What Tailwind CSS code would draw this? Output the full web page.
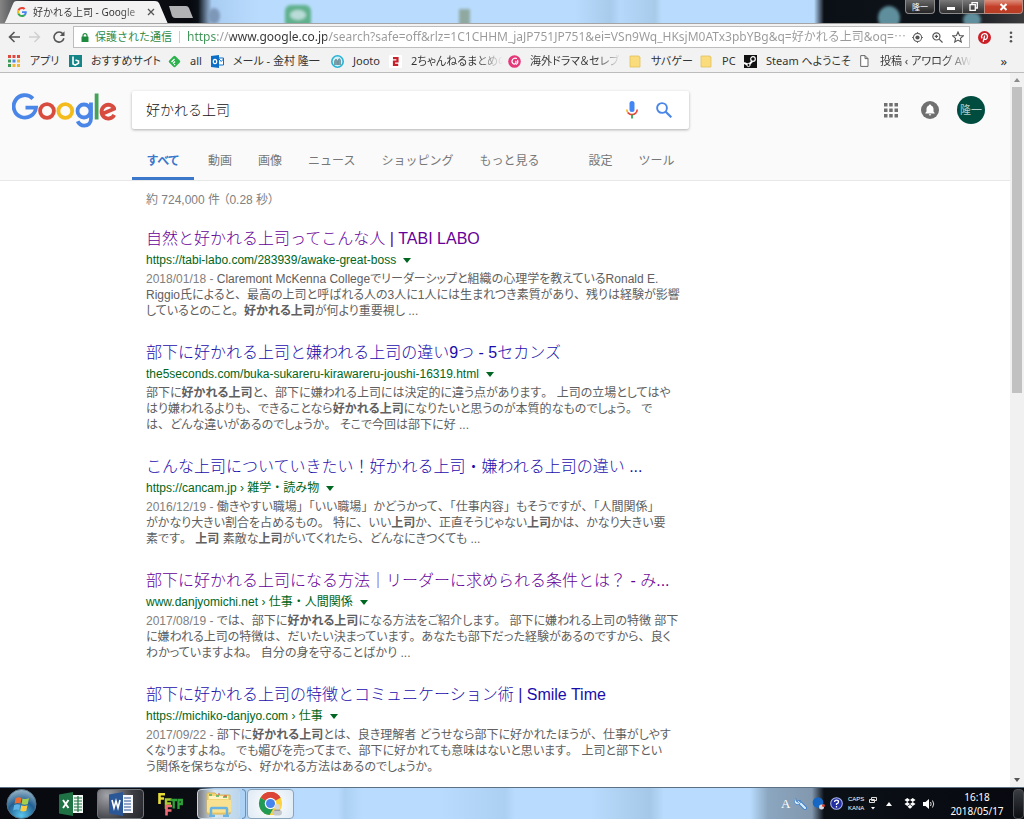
<!DOCTYPE html>
<html lang="ja">
<head>
<meta charset="utf-8">
<title>好かれる上司 - Google 検索</title>
<script src="https://cdn.jsdelivr.net/npm/@tailwindcss/browser@4"></script>
</head>
<body class="flex min-h-screen flex-col overflow-x-hidden bg-white font-['Liberation_Sans','Noto_Sans_CJK_JP',sans-serif] text-[#6a6a6a]">

<!-- window frame: tab strip and caption buttons -->
<header class="relative flex h-6 items-start justify-between overflow-hidden border-b border-[#a5a5a5] bg-[linear-gradient(90deg,#858585_0,#1b1d22_30px,#07090f_190px,#0b1017_198px,#a9cdf2_212px,#b9dcfe_260px,#b9dcfe_575px,#a8cbec_610px,#b5d8fb_620px,#a9cbea_655px,#b9dcfe_662px,#b9dcfe_814px,#0b0f16_824px,#10151c_960px,#3b3b3d_1024px)]">
  <svg class="absolute left-0 top-0 h-6 w-full" aria-hidden="true">
    <defs><filter id="soft"><feGaussianBlur stdDeviation="1.5"/></filter></defs>
    <g filter="url(#soft)">
      <rect x="285" y="5" width="26" height="24" rx="6" fill="#5fb08c"/>
      <ellipse cx="298" cy="15" rx="8" ry="5" fill="#b9dcd8"/>
      <rect x="459" y="9" width="11" height="20" fill="#8fa9a0"/>
      <ellipse cx="214" cy="16" rx="6" ry="8" fill="#7d97b8"/>
      <ellipse cx="889" cy="18" rx="11" ry="12" fill="#5e8f9c"/>
      <ellipse cx="972" cy="20" rx="9" ry="8" fill="#5e8f9c"/>
    </g>
  </svg>
  <div class="relative flex">
    <div class="relative flex h-6 w-[168px] items-center pl-[17px]">
      <svg class="absolute inset-0 h-6 w-[168px]" viewBox="0 0 168 24" aria-hidden="true"><path d="M4 24C7 20 12 5 14 2Q15 1 17 1H155Q158 1 159 3L168 24Z" fill="#f2f2f2"/></svg>
      <svg class="relative h-[10px] w-[10px] shrink-0" viewBox="0 0 48 48" aria-hidden="true"><path fill="#ea4335" d="M24 9.5c3.5 0 6.700 1.200 9.200 3.600l6.900-6.900C35.900 2.400 30.500 0 24 0 14.600 0 6.500 5.400 2.600 13.200l8 6.200C12.400 13.700 17.700 9.500 24 9.500z"/><path fill="#4285f4" d="M47 24.500c0-1.600-.2-3.100-.4-4.500H24v9h12.900c-.6 3-2.200 5.500-4.800 7.200l7.700 6C44.400 38 47 31.800 47 24.500z"/><path fill="#fbbc05" d="M10.500 28.600c-.5-1.500-.8-3-.8-4.600s.3-3.100.8-4.600l-8-6.200C.9 16.500 0 20.100 0 24s.9 7.500 2.600 10.800z"/><path fill="#34a853" d="M24 48c6.500 0 11.900-2.100 15.900-5.800l-7.700-6c-2.200 1.500-4.900 2.300-8.200 2.300-6.300 0-11.600-4.200-13.500-9.900l-8 6.200C6.500 42.600 14.600 48 24 48z"/></svg>
      <span class="relative ml-1.5 w-[108px] whitespace-nowrap bg-[linear-gradient(90deg,#333_88px,#aaa_108px)] bg-clip-text font-['Noto_Sans','Noto_Sans_CJK_JP',sans-serif] text-[10px] leading-4 text-transparent">好かれる上司 - Google</span>
      <button class="relative ml-1.5 h-2 w-2" aria-label="タブを閉じる"><svg class="h-2 w-2" viewBox="0 0 8 8"><path d="M1 1l6 6M7 1L1 7" stroke="#555" stroke-width="1.300"/></svg></button>
    </div>
    <button class="mt-1.5 h-3 w-6" aria-label="新しいタブ"><svg class="h-3 w-[26px]" viewBox="0 0 26 12"><path d="M1 0H18Q20 0 21 2L25 12H7Q5 12 4 10Z" fill="#b2b2b4"/></svg></button>
  </div>
  <div class="relative mr-px flex h-[14px] text-white">
    <button class="mr-1 h-[14px] w-[30px] rounded-b border border-t-0 border-[#8b8b8b] bg-linear-to-b from-[#696969] to-[#252525] text-center font-['Noto_Sans_CJK_JP',sans-serif] text-[8px] leading-[12px]">隆一</button>
    <button class="grid h-[14px] w-6 place-items-center rounded-bl border border-t-0 border-[#8b8b8b] bg-linear-to-b from-[#7a7a7a] to-[#303030]" aria-label="最小化"><span class="mt-1 h-[3px] w-2 bg-white"></span></button>
    <button class="grid h-[14px] w-[21px] place-items-center border-b border-[#8b8b8b] bg-linear-to-b from-[#7a7a7a] to-[#303030]" aria-label="元に戻す"><svg class="h-[9px] w-[9px]" viewBox="0 0 9 9"><path d="M3 2V.7H8.300V6H7M1 2.700H6.300V8.300H1Z" fill="none" stroke="#fff" stroke-width="1.300"/></svg></button>
    <button class="grid h-[14px] w-[39px] place-items-center rounded-br border border-t-0 border-[#b98a80] bg-linear-to-b from-[#dc8f7c] via-[#c5402a] to-[#b63c22]" aria-label="閉じる"><svg class="h-2 w-[9px]" viewBox="0 0 9 8"><path d="M1.500 1l6 6M7.500 1l-6 6" stroke="#fff" stroke-width="2"/></svg></button>
  </div>
</header>

<!-- toolbar -->
<div class="flex h-[26px] items-center bg-[#f2f2f2] pl-2 pr-1.5 font-['Noto_Sans','Noto_Sans_CJK_JP',sans-serif]">
  <button class="mr-[9px]" aria-label="戻る"><svg class="h-3 w-3" viewBox="0 0 12 12" fill="none" stroke="#555" stroke-width="1.600"><path d="M12 6H1.500M6.500 1L1.500 6l5 5"/></svg></button>
  <button class="mr-[12px]" aria-label="進む"><svg class="h-3 w-3" viewBox="0 0 12 12" fill="none" stroke="#cfcfcf" stroke-width="1.400"><path d="M0 6H10.500M5.500 1l5 5-5 5"/></svg></button>
  <button class="mr-2" aria-label="再読み込み"><svg class="h-3 w-3" viewBox="0 0 12 12"><path d="M10 3A5 5 0 1 0 10.900 7.300" fill="none" stroke="#555" stroke-width="1.600"/><path d="M11.500.3V5H6.800Z" fill="#555"/></svg></button>
  <div class="flex h-[22px] min-w-0 flex-1 items-center border border-[#bdbdbd] bg-white pl-[7px] pr-[5px]">
    <svg class="h-[9px] w-2 shrink-0" viewBox="0 0 8 9" aria-hidden="true"><path d="M2 4V2.700a2 2 0 0 1 4 0V4" fill="none" stroke="#1f8a3e" stroke-width="1.200"/><rect x=".5" y="3.500" width="7" height="5.500" rx=".6" fill="#1f8a3e"/></svg>
    <span class="ml-1.5 shrink-0 whitespace-nowrap text-[11px] leading-4 text-[#2f8b48]">保護された通信</span>
    <span class="mx-[7px] h-3 w-px shrink-0 bg-[#ccc]"></span>
    <input aria-label="アドレス" class="min-w-0 flex-1 bg-[linear-gradient(90deg,#3f9457_0_30px,#999_30px_43px,#333_43px_140px,#999_140px)] bg-clip-text text-xs text-transparent outline-none" value="https://www.google.co.jp/search?safe=off&amp;rlz=1C1CHHM_jaJP751JP751&amp;ei=VSn9Wq_HKsjM0ATx3pbYBg&amp;q=好かれる上司&amp;oq=⋯">
    <button class="mr-[9px]" aria-label="位置情報"><svg class="h-[11px] w-[11px]" viewBox="0 0 12 12"><circle cx="6" cy="6" r="4.500" fill="none" stroke="#666" stroke-width="1.200"/><circle cx="6" cy="6" r="2.300" fill="#555"/><path d="M6 0v2M6 10v2M0 6h2M10 6h2" stroke="#666"/></svg></button>
    <button class="mr-[9px]" aria-label="拡大"><svg class="h-[11px] w-[11px]" viewBox="0 0 12 12" fill="none" stroke="#555" stroke-width="1.300"><circle cx="4.800" cy="4.800" r="3.900"/><path d="M7.700 7.700l3.800 3.800M3 4.800h3.600M4.800 3v3.600"/></svg></button>
    <button aria-label="ブックマーク"><svg class="h-3 w-3" viewBox="0 0 24 24" fill="none" stroke="#555" stroke-width="2.200"><path d="M12 2l3 7 7.500.7-5.700 5 1.700 7.300L12 18.100 5.500 22l1.700-7.300-5.700-5L9 9z"/></svg></button>
  </div>
  <button class="ml-2" aria-label="Pinterest"><svg class="h-[13px] w-[13px]" viewBox="0 0 24 24"><circle cx="12" cy="12" r="12" fill="#cb1f27"/><path d="M9.500 20L12.300 8.500M7.600 13.500C4.500 9 8 5 12.300 5c4 0 6 3 5 6.600-1 4-4.500 5-6.300 2.700" fill="none" stroke="#fff" stroke-width="2.400"/></svg></button>
  <button class="ml-4 mr-1" aria-label="メニュー"><svg class="h-3 w-[7px]" viewBox="0 0 7 12" fill="#555"><circle cx="4" cy="1.800" r="1.300"/><circle cx="4" cy="6" r="1.300"/><circle cx="4" cy="10.200" r="1.300"/></svg></button>
</div>

<!-- bookmarks -->
<nav aria-label="ブックマーク バー" class="flex h-[23px] items-center border-b border-[#bcbcbc] bg-[#f2f2f2] pl-2 font-['Noto_Sans','Noto_Sans_CJK_JP',sans-serif] text-[11px] leading-4 whitespace-nowrap text-[#333]">
  <a href="#" class="flex w-[61px] items-center gap-[9px]"><svg class="h-3 w-[13px] shrink-0" viewBox="0 0 13 12"><path fill="#e0483e" d="M0 0h3v3H0zM4.500 0h3v3h-3zM9 0h3v3H9z"/><path fill="#3c9a58" d="M0 4.500h3v3H0z"/><path fill="#4a86e8" d="M4.500 4.500h3v3h-3z"/><path fill="#eeb633" d="M9 4.500h3v3H9zM4.500 9h3v3h-3zM9 9h3v3H9z"/><path fill="#3c9a58" d="M0 9h3v3H0z"/></svg><span class="[font-feature-settings:'palt']">アプリ</span></a>
  <a href="#" class="flex w-[99px] items-center gap-[9px]"><svg class="h-3 w-[13px] shrink-0" viewBox="0 0 13 12"><rect width="13" height="12" fill="#138586"/><path d="M4 1.500V9l2.200 1.200L9.500 8.300V6L6.500 5" fill="none" stroke="#fff" stroke-width="1.600"/></svg><span class="[font-feature-settings:'palt']">おすすめサイト</span></a>
  <a href="#" class="flex w-[43px] items-center gap-[9px]"><svg class="h-[13px] w-[13px] shrink-0" viewBox="0 0 13 13"><rect x="2" y="2" width="9" height="9" rx="1.500" transform="rotate(45 6.500 6.500)" fill="#2bb24c"/><path d="M3.500 7L6.500 4M5 8.500l2-2M6.200 10l.8-.8" stroke="#fff" stroke-width="1.300"/></svg><span>all</span></a>
  <a href="#" class="flex w-[120px] items-center gap-[9px]"><svg class="h-[13px] w-[13px] shrink-0" viewBox="0 0 13 13"><path d="M0 1l8-1v13l-8-1z" fill="#0b6fc8"/><path d="M8 3h4.500v7H8" fill="#fff" stroke="#0b6fc8"/><path d="M8 4l2.200 2.500L12.500 4" fill="none" stroke="#0b6fc8"/><ellipse cx="4" cy="6.500" rx="1.700" ry="2.200" fill="none" stroke="#fff" stroke-width="1.200"/></svg><span class="[font-feature-settings:'palt']">メール - 金村 隆一</span></a>
  <a href="#" class="flex w-[58px] items-center gap-[9px]"><svg class="h-[13px] w-[13px] shrink-0" viewBox="0 0 13 13"><circle cx="6.500" cy="6.500" r="5.700" fill="#d5f0f8" stroke="#25b3d6" stroke-width="1.600"/><path d="M3.500 10V6l1.500-2 1.500 2v4M7 10V5l1.300-1.500L9.500 5v5" fill="#7c9ea8" stroke="#5a7f8a" stroke-width=".6"/></svg><span>Jooto</span></a>
  <a href="#" class="flex w-[119px] items-center gap-[9px]"><svg class="h-[13px] w-[13px] shrink-0" viewBox="0 0 13 13"><rect width="13" height="13" rx="1" fill="#fff"/><path d="M4 3.200h4.500v3.300H5v3.300h4.200" fill="none" stroke="#c6202b" stroke-width="2.200"/></svg><span class="bg-[linear-gradient(90deg,#333_65px,transparent_92px)] bg-clip-text text-transparent [font-feature-settings:'palt']">2ちゃんねるまとめの</span></a>
  <a href="#" class="flex w-[121px] items-center gap-[9px]"><svg class="h-[13px] w-[13px] shrink-0" viewBox="0 0 13 13"><circle cx="6.500" cy="6.500" r="6.300" fill="#e4387a"/><path d="M9 3.500C5 2 2.500 6 5 8.500c2 1.500 4-1 2.500-2.500M8 9.500c2-1 2-3 1.500-4.500" fill="none" stroke="#fff" stroke-width="1.200"/></svg><span class="bg-[linear-gradient(90deg,#333_65px,transparent_92px)] bg-clip-text text-transparent [font-feature-settings:'palt']">海外ドラマ＆セレブ</span></a>
  <a href="#" class="flex w-[71px] items-center gap-[9px]"><svg class="h-[13px] w-[13px] shrink-0" viewBox="0 0 13 13"><path d="M1 1h9v1h1v10H1z" fill="#fbdc7c" stroke="#e3c05c" stroke-width=".8"/></svg><span class="[font-feature-settings:'palt']">サバゲー</span></a>
  <a href="#" class="flex w-[44px] items-center gap-[9px]"><svg class="h-[13px] w-[13px] shrink-0" viewBox="0 0 13 13"><path d="M1 1h9v1h1v10H1z" fill="#fbdc7c" stroke="#e3c05c" stroke-width=".8"/></svg><span>PC</span></a>
  <a href="#" class="flex w-[116px] items-center gap-[9px]"><svg class="h-[13px] w-[13px] shrink-0" viewBox="0 0 13 13"><rect width="13" height="13" fill="#111"/><path d="M0 8l4.500 2L8 6.500" fill="none" stroke="#fff" stroke-width="2"/><circle cx="9" cy="4" r="2.300" fill="#111" stroke="#fff" stroke-width="1.200"/><circle cx="4.500" cy="10" r="1.600" fill="#111" stroke="#fff"/></svg><span class="[font-feature-settings:'palt']">Steam へようこそ</span></a>
  <a href="#" class="flex w-[110px] items-center gap-[9px]"><svg class="h-3 w-[11px] shrink-0" viewBox="0 0 11 12"><path d="M.7.600H5L8 3.600V11.400H.7zM5 .6v3h3" fill="#fff" stroke="#666"/></svg><span class="bg-[linear-gradient(90deg,#333_65px,transparent_92px)] bg-clip-text text-transparent [font-feature-settings:'palt']">投稿 ‹ アワログ AW</span></a>
  <button class="ml-auto mr-[17px] text-[13px]" aria-label="その他のブックマーク">»</button>
</nav>

<!-- page -->
<div class="flex flex-1">
  <main class="min-w-0 flex-1">
    <div class="border-b border-[#e8e8e8] bg-[#fafafa] pt-[18px]">
      <div class="flex items-center">
        <a href="#" aria-label="Google" class="ml-3 mr-4 shrink-0"><svg class="h-9 w-[104px]" viewBox="0 -1 104 36" fill="none" stroke-width="3.800"><path stroke="#4a86e8" d="M20.900 5.600A11.200 11.200 0 1 0 24 14.600H13.500"/><circle cx="35" cy="18" r="6.900" stroke="#d84c40"/><circle cx="53.300" cy="18" r="6.900" stroke="#f3bb1c"/><g stroke="#4a86e8"><circle cx="72" cy="18" r="6.500"/><path d="M79 9.500V25.500C79 30.500 76 32.600 72.300 32.600C69 32.600 66.700 30.800 65.700 28.300"/></g><path stroke="#45a25a" d="M84.600 .5V26.500"/><path stroke="#d84c40" d="M90.500 20.800L102.300 15.700A6.700 6.900 0 1 0 102.200 21.800"/></svg></a>
        <form class="flex h-[38px] w-[557px] items-center rounded-xs bg-white shadow-[0_1px_3px_rgba(0,0,0,0.300)]">
          <input aria-label="検索" value="好かれる上司" class="min-w-0 flex-1 bg-transparent px-[14px] text-sm font-light text-[#111] outline-none">
          <button type="button" class="mr-[18px]" aria-label="音声検索"><svg class="h-[18px] w-3" viewBox="0 0 12 18" fill="none"><rect x="3.500" width="5" height="11" rx="2.500" fill="#4285f4"/><path d="M.8 8.500Q1 10.500 1.800 11.600" stroke="#f5b21a" stroke-width="1.600"/><path d="M1.800 11.600Q6 15.800 10.200 11.600" stroke="#ea4335" stroke-width="1.700"/><path d="M10.200 11.600Q11 10.500 11.200 8.500" stroke="#ea4335" stroke-width="1.600"/><path d="M6 13.500V17.500" stroke="#34a853" stroke-width="1.800"/></svg></button>
          <button type="submit" class="mr-[17px]" aria-label="Google 検索"><svg class="h-4 w-4" viewBox="0 0 16 16" fill="none" stroke="#4a86e8"><circle cx="6" cy="6" r="4.900" stroke-width="1.900"/><path d="M9.500 9.500l5.800 5.800" stroke-width="2.200"/></svg></button>
        </form>
        <div class="ml-auto mr-[25px] flex items-center gap-[22px]">
          <button aria-label="Google アプリ"><svg class="h-[15px] w-4" viewBox="0 0 16 15" fill="#707070"><path d="M1 0h3.500v3.500H1zM6.200 0h3.500v3.500H6.200zM11.500 0H15v3.500h-3.500zM1 5.500h3.500V9H1zM6.200 5.500h3.500V9H6.200zM11.500 5.500H15V9h-3.500zM1 11h3.500v3.500H1zM6.200 11h3.500v3.500H6.200zM11.500 11H15v3.500h-3.500z"/></svg></button>
          <button aria-label="通知"><svg class="h-[18px] w-[18px]" viewBox="0 0 18 18"><circle cx="9" cy="9" r="9" fill="#707070"/><path d="M9 3.500c.7 0 1 .4 1 1C11.800 5 12.500 6.500 12.500 8v2.500l1.200 1.500v.5H4.300V12l1.200-1.500V8C5.500 6.500 6.200 5 8 4.500c0-.6.300-1 1-1zM7.800 13.200h2.400a1.200 1.200 0 0 1-2.400 0z" fill="#fff"/></svg></button>
          <button class="-ml-1 grid h-7 w-7 place-items-center rounded-full bg-[#004d40] text-[11px] text-[#b5cdc9]">隆一</button>
        </div>
      </div>
      <nav aria-label="検索ツール" class="ml-[132px] mt-3 flex h-[39px] text-xs whitespace-nowrap text-[#777]">
        <a href="#" class="grid w-[62px] place-items-center border-b-3 border-[#3b78cc] pt-1 font-bold text-[#3b78cc] [font-feature-settings:'palt']">すべて</a>
        <div class="flex items-center gap-[26px] pl-[14px] pt-px">
          <a href="#">動画</a><a href="#">画像</a><a href="#">ニュース</a><a href="#">ショッピング</a><a href="#">もっと見る</a>
        </div>
        <div class="flex items-center gap-[26px] pl-[49px] pt-px"><a href="#">設定</a><a href="#">ツール</a></div>
      </nav>
    </div>

    <p class="ml-[146px] pt-[11px] text-xs leading-4 text-[#808080] [font-feature-settings:'palt']">約 724,000 件 （0.28 秒）</p>

    <div class="ml-[146px] mt-[19px] space-y-[22px] whitespace-nowrap pb-2">
      <article>
        <h3 class="text-base leading-6 font-light"><a href="#" class="text-[#660099]">自然と好かれる上司ってこんな人 | TABI LABO</a></h3>
        <cite class="flex items-center gap-[7px] text-xs leading-[18px] text-[#006621] not-italic">https://tabi-labo.com/283939/awake-great-boss <button aria-label="メニュー"><svg class="h-[5px] w-2" viewBox="0 0 8 5"><path d="M0 0h8L4 5z" fill="#006621"/></svg></button></cite>
        <p class="snippet mt-0.5 text-xs leading-4 text-[#606060] [font-feature-settings:'palt']"><span class="text-[#808080]">2018/01/18 - </span>Claremont McKenna Collegeでリーダーシップと組織の心理学を教えているRonald E.<br>Riggio氏によると、最高の上司と呼ばれる人の3人に1人には生まれつき素質があり、残りは経験が影響<br>しているとのこと。<b>好かれる上司</b>が何より重要視し ...</p>
      </article>
      <article>
        <h3 class="text-base leading-6 font-light"><a href="#" class="text-[#1a0dab]">部下に好かれる上司と嫌われる上司の違い9つ - 5セカンズ</a></h3>
        <cite class="flex items-center gap-[7px] text-xs leading-[18px] text-[#006621] not-italic">the5seconds.com/buka-sukareru-kirawareru-joushi-16319.html <button aria-label="メニュー"><svg class="h-[5px] w-2" viewBox="0 0 8 5"><path d="M0 0h8L4 5z" fill="#006621"/></svg></button></cite>
        <p class="snippet mt-0.5 text-xs leading-4 text-[#606060] [font-feature-settings:'palt']">部下に<b>好かれる上司</b>と、部下に嫌われる上司には決定的に違う点があります。 上司の立場としてはや<br>はり嫌われるよりも、できることなら<b>好かれる上司</b>になりたいと思うのが本質的なものでしょう。 で<br>は、どんな違いがあるのでしょうか。 そこで今回は部下に好 ...</p>
      </article>
      <article>
        <h3 class="text-base leading-6 font-light"><a href="#" class="text-[#1a0dab]">こんな上司についていきたい！好かれる上司・嫌われる上司の違い ...</a></h3>
        <cite class="flex items-center gap-[7px] text-xs leading-[18px] text-[#006621] not-italic">https://cancam.jp › 雑学・読み物 <button aria-label="メニュー"><svg class="h-[5px] w-2" viewBox="0 0 8 5"><path d="M0 0h8L4 5z" fill="#006621"/></svg></button></cite>
        <p class="snippet mt-0.5 text-xs leading-4 text-[#606060] [font-feature-settings:'palt']"><span class="text-[#808080]">2016/12/19 - </span>働きやすい職場」「いい職場」かどうかって、「仕事内容」もそうですが、「人間関係」<br>がかなり大きい割合を占めるもの。 特に、いい<b>上司</b>か、正直そうじゃない<b>上司</b>かは、かなり大きい要<br>素です。 <b>上司</b> 素敵な<b>上司</b>がいてくれたら、どんなにきつくても ...</p>
      </article>
      <article>
        <h3 class="text-base leading-6 font-light"><a href="#" class="text-[#660099]">部下に好かれる上司になる方法｜リーダーに求められる条件とは？ - み...</a></h3>
        <cite class="flex items-center gap-[7px] text-xs leading-[18px] text-[#006621] not-italic">www.danjyomichi.net › 仕事・人間関係 <button aria-label="メニュー"><svg class="h-[5px] w-2" viewBox="0 0 8 5"><path d="M0 0h8L4 5z" fill="#006621"/></svg></button></cite>
        <p class="snippet mt-0.5 text-xs leading-4 text-[#606060] [font-feature-settings:'palt']"><span class="text-[#808080]">2017/08/19 - </span>では、部下に<b>好かれる上司</b>になる方法をご紹介します。 部下に嫌われる上司の特徴 部下<br>に嫌われる上司の特徴は、だいたい決まっています。あなたも部下だった経験があるのですから、良く<br>わかっていますよね。 自分の身を守ることばかり ...</p>
      </article>
      <article>
        <h3 class="text-base leading-6 font-light"><a href="#" class="text-[#1a0dab]">部下に好かれる上司の特徴とコミュニケーション術 | Smile Time</a></h3>
        <cite class="flex items-center gap-[7px] text-xs leading-[18px] text-[#006621] not-italic">https://michiko-danjyo.com › 仕事 <button aria-label="メニュー"><svg class="h-[5px] w-2" viewBox="0 0 8 5"><path d="M0 0h8L4 5z" fill="#006621"/></svg></button></cite>
        <p class="snippet mt-0.5 text-xs leading-4 text-[#606060] [font-feature-settings:'palt']"><span class="text-[#808080]">2017/09/22 - </span>部下に<b>好かれる上司</b>とは、良き理解者 どうせなら部下に好かれたほうが、仕事がしやす<br>くなりますよね。 でも媚びを売ってまで、部下に好かれても意味はないと思います。 上司と部下とい<br>う関係を保ちながら、好かれる方法はあるのでしょうか。</p>
      </article>
    </div>
  </main>

  <!-- scrollbar -->
  <div class="flex w-[14px] shrink-0 flex-col items-center bg-[#f1f1f1]" aria-hidden="true">
    <svg class="my-1 h-1.5 w-2" viewBox="0 0 8 6"><path d="M1 5l3-4 3 4z" fill="#8a8a8a"/></svg>
    <div class="h-[306px] w-[10px] bg-[#c1c1c1]"></div>
    <svg class="mb-1 mt-auto h-1.5 w-2" viewBox="0 0 8 6"><path d="M1 1l3 4 3-4z" fill="#555"/></svg>
  </div>
</div>

<!-- taskbar -->
<footer class="flex h-8 items-center border-t border-[#5c7185] bg-[linear-gradient(90deg,#07090f_0,#0a0d12_198px,#a9cdf0_214px,#b9dcfe_300px,#b9dcfe_338px,#acd0f2_345px,#b9dcfe_362px,#b9dcfe_440px,#acd0f2_505px,#b9dcfe_515px,#b9dcfe_590px,#a5c8e8_650px,#b9dcfe_664px,#b9dcfe_750px,#8ba6c0_768px,#8298ae_812px,#0b1017_824px,#07090f_1024px)]">
  <button class="ml-1.5 shrink-0" aria-label="スタート"><svg class="h-[30px] w-[31px]" viewBox="0 0 31 30"><defs><radialGradient id="orb" cx=".5" cy=".9" r=".9"><stop offset="0" stop-color="#59c6ee"/><stop offset=".55" stop-color="#215f92"/><stop offset="1" stop-color="#9db8c8"/></radialGradient></defs><circle cx="15.500" cy="15" r="14.500" fill="url(#orb)" stroke="#547488"/><path d="M9.500 9.500q3-2 6-.5l-1 5.500q-3-1.300-6 .3z" fill="#ec6b33"/><path d="M16.500 9.500q3 1.300 6.500-.2l-1.200 5.700q-3 1.300-6.200 0z" fill="#a3cf4a"/><path d="M8.200 16q3-1.500 6-.2l-1 5.200q-3-1.300-6 .5z" fill="#5fb4e8"/><path d="M15.300 16.300q3 1.300 6.200 0l-1.200 5.500q-3 1.200-6 0z" fill="#fccb3d"/></svg></button>
  <button class="ml-[22px] shrink-0" aria-label="Excel"><svg class="h-6 w-6" viewBox="0 0 24 24"><path d="M13 3h11v18H13z" fill="#f4f8f5"/><path d="M15 6h8M15 9h8M15 12h8M15 15h8M15 18h8M19 4v16" stroke="#1f7244" stroke-width="1.200"/><path d="M0 2.500L14 0v24L0 21.500z" fill="#1f7244"/><path d="M4 8l5.500 8M9.500 8L4 16" stroke="#fff" stroke-width="1.900"/></svg></button>
  <button class="ml-[14px] grid h-[30px] w-[47px] shrink-0 place-items-center rounded-sm border border-[#70747b] bg-[radial-gradient(circle_at_20%_20%,#a3a4a9,#3c3e44_60%,#24262b)]" aria-label="Word"><svg class="h-6 w-6" viewBox="0 0 24 24"><path d="M13 3h11v18H13z" fill="#f5f7fb"/><path d="M15 6h7M15 9h7M15 12h7M15 15h7M15 18h7" stroke="#2b5797" stroke-width="1.100"/><path d="M0 2.500L14 0v24L0 21.500z" fill="#2b5797"/><path d="M3 8l2 8 2-7 2 7 2-8" fill="none" stroke="#fff" stroke-width="1.600"/></svg></button>
  <button class="ml-[14px] shrink-0" aria-label="FFFTP"><svg class="h-6 w-[26px]" viewBox="0 0 26 24" fill="none"><path d="M1.500 12V2.300H7M1.500 6.500H6" stroke="#e8dc38" stroke-width="2.600"/><path d="M8 17V7.500h5.500M8 11.500h5" stroke="#a9c936" stroke-width="2.500"/><path d="M12.500 8H19M15.700 8v8.500M20.500 17V8h3.300v4H20.500" stroke="#2ea138" stroke-width="2.300"/><path d="M8.500 23.500v-9.500H14M8.500 18.500h5" stroke="#ef6b75" stroke-width="2.600"/></svg></button>
  <button class="ml-[13px] grid h-[30px] w-[43px] shrink-0 place-items-center rounded-sm border border-[#c7d6e2] bg-[linear-gradient(90deg,#77797e,#d5e5f2_40%,#bcd6ec)]" aria-label="エクスプローラー"><svg class="h-[26px] w-[26px]" viewBox="0 0 26 26"><path d="M1 2h8l2 2h13v19H1z" fill="#f2d679" stroke="#d4b153"/><path d="M3 5h19v3H3z" fill="#fdf3c4"/><path d="M3 4h3M10 5h3M17 6h4" stroke="#4cae60" stroke-width="1.500"/><path d="M12 3h2M18 5h3" stroke="#d94b3a"/><path d="M1 9h24v12H1z" fill="#f8e292"/><path d="M5 25v-7q0-1 1-1h14q1 0 1 1v7M3 25h6M17 25h6" fill="none" stroke="#69b3e3" stroke-width="2.500"/></svg></button>
  <span class="ml-0.5 h-[30px] w-1 shrink-0 rounded-r-sm border border-l-0 border-[#6e90ae]"></span>
  <button class="ml-px grid h-[30px] w-[47px] shrink-0 place-items-center rounded-sm border border-[#8aa4ba] bg-[radial-gradient(circle_at_50%_50%,#ffffff,#dfeaf4)]" aria-label="Chrome"><svg class="h-[25px] w-[25px]" viewBox="0 0 26 26"><circle cx="13" cy="13" r="12" fill="#fdd33c"/><path d="M13 13L2.600 7A12 12 0 0 1 23.400 7z" fill="#dc4437"/><path d="M13 13L2.600 7A12 12 0 0 0 12 25l5-9z" fill="#219a56"/><path d="M13 7H23.400A12 12 0 0 0 5 4z" fill="#dc4437"/><circle cx="13" cy="13" r="6" fill="#fff"/><circle cx="13" cy="13" r="4.700" fill="#4684ee"/><circle cx="20" cy="16.500" r="3" fill="#d8d8d8"/><ellipse cx="20" cy="22.500" rx="5" ry="3" fill="#c5c8ca"/><path d="M17 20h6" stroke="#888"/></svg></button>
  <div class="ml-auto flex shrink-0 items-center text-white">
    <span class="w-[13px] font-['Liberation_Serif',serif] text-[13px] leading-4">A</span>
    <svg class="h-[13px] w-[13px]" viewBox="0 0 13 13"><path d="M5 5l6 6" stroke="#3c7fc7" stroke-width="4" stroke-linecap="round"/><path d="M5 5l6 6" stroke="#d6ebff" stroke-width="2.400" stroke-linecap="round"/><path d="M2 1.500A3.200 3.200 0 1 0 6.500 3.500L4.500 5.500 2 4z" fill="#d6ebff" stroke="#3c7fc7" stroke-width=".8"/></svg>
    <svg class="ml-[5px] h-[13px] w-[13px]" viewBox="0 0 13 13"><circle cx="6" cy="5.500" r="5.300" fill="#1667c4"/><circle cx="9.500" cy="10" r="2.500" fill="#d8dce0"/><circle cx="11.500" cy="8.500" r="1.500" fill="#d8402a"/></svg>
    <svg class="ml-[5px] h-[13px] w-[13px]" viewBox="0 0 13 13" fill="none"><circle cx="6.500" cy="6.500" r="5.800" fill="#2330a4" stroke="#aab4ec" stroke-width="1.100"/><path d="M4.500 5Q4.700 3.200 6.500 3.200 8.500 3.200 8.500 4.900 8.500 6 6.500 6.900V8M6.500 9v1.400" stroke="#fff" stroke-width="1.300"/></svg>
    <span class="ml-[5px] w-[21px] text-[6px] leading-[9px]">CAPS<br>KANA</span>
    <svg class="h-[18px] w-2" viewBox="0 0 8 18"><path d="M2.500 2.500h5v3h-5zM.5 4.500h5v3h-5z" fill="#111" stroke="#ddd"/><path d="M2 12h4L4 14.500z" fill="#fff"/></svg>
    <svg class="ml-2 h-2 w-2" viewBox="0 0 8 8"><path d="M1 6l3-4 3 4z" fill="#fff"/></svg>
    <svg class="ml-[11px] h-[11px] w-3" viewBox="0 0 12 11" fill="#fff"><path d="M3.300 0L6 2 3.300 4 .5 2zM8.700 0L11.500 2 8.700 4 6 2zM3.300 4L6 6 3.300 8 .5 6zM8.700 4L11.500 6 8.700 8 6 6zM6 6.800l2.500 2L6 10.800 3.500 8.800z"/></svg>
    <svg class="ml-[7px] h-3 w-3" viewBox="0 0 12 12"><path d="M0 4h2.500L6 1v10L2.500 8H0z" fill="#fff"/><path d="M7.500 4q1.300 2 0 4M9.500 2.500q2.500 3.500 0 7" fill="none" stroke="#ddd"/></svg>
    <time class="ml-[14px] w-14 text-center font-['Noto_Sans',sans-serif] text-[10px] leading-[14px]">16:18<br>2018/05/17</time>
    <button class="ml-2 h-[30px] w-[11px] rounded-sm border border-[#4b4e53] bg-linear-to-b from-[#3a3d42] to-[#0c0e12]" aria-label="デスクトップの表示"></button>
  </div>
</footer>

<script>
  // Kana is set proportionally in snippets; punctuation keeps its full width.
  for (const p of document.querySelectorAll('.snippet')) {
    p.innerHTML = p.innerHTML.replace(/[、。「」]+/g, '<span class="[font-feature-settings:normal]">$&</span>');
  }
</script>
</body>
</html>
